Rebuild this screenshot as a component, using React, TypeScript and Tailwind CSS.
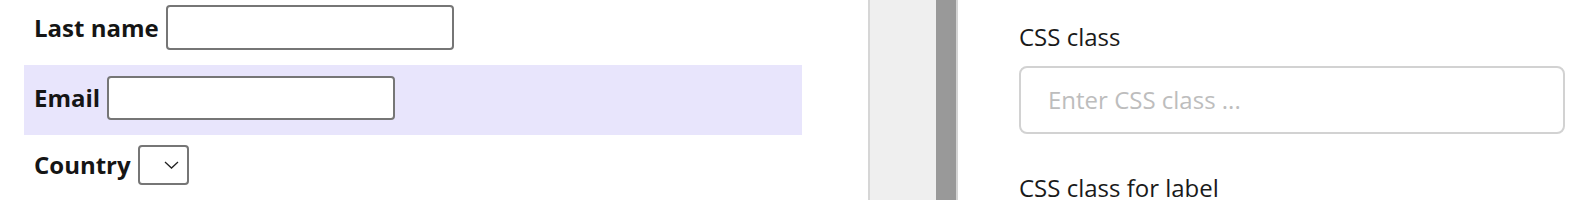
import React from "react";

export default function App() {
  return (
    <div className="flex h-[200px] w-[1594px] overflow-hidden bg-white font-['Open_Sans',sans-serif] text-[#151515]">
      <div className="w-[868px] shrink-0 pl-[24px]">
        <div className="w-[778px]">
          <div className="flex h-[65px] items-start gap-[7px] pl-[10px] pt-[5px]">
            <span className="flex h-[45px] items-center text-[24px] font-bold">Last name</span>
            <div className="h-[45px] w-[288px] rounded-[4px] border-2 border-[#767676] bg-white" />
          </div>
          <div className="flex h-[70px] items-start gap-[7px] bg-[#e8e5fc] pl-[10px] pt-[11px]">
            <span className="flex h-[44px] items-center text-[24px] font-bold">Email</span>
            <div className="h-[44px] w-[288px] rounded-[4px] border-2 border-[#767676] bg-white" />
          </div>
          <div className="flex h-[70px] items-start gap-[7px] pl-[10px] pt-[10px]">
            <span className="flex h-[40px] items-center text-[24px] font-bold">Country</span>
            <div className="flex h-[40px] w-[51px] items-center justify-end rounded-[4px] border-2 border-[#767676] bg-white pr-[8px]">
              <svg width="15" height="8" viewBox="0 0 15 8" fill="none">
                <polyline points="1,1 7.5,7 14,1" stroke="#222" strokeWidth="1.3" />
              </svg>
            </div>
          </div>
        </div>
      </div>
      <div className="w-[68px] shrink-0 border-l-2 border-[#d6d6d6] bg-[#efefef]" />
      <div className="w-[22px] shrink-0 border-r-2 border-[#d4d4d4] bg-[#999999]" />
      <div className="flex-1 pl-[61px] pt-[21px]">
        <div className="text-[24px] leading-[32px] text-[#1a1a1a]">CSS class</div>
        <div className="mt-[13px] flex h-[68px] w-[546px] items-center rounded-[8px] border-2 border-[#d2d2d2] bg-white pl-[27px] text-[24px] text-[#bdbdbd]">
          Enter CSS class ...
        </div>
        <div className="mt-[38px] text-[24px] leading-[32px] text-[#1a1a1a]">CSS class for label</div>
      </div>
    </div>
  );
}
